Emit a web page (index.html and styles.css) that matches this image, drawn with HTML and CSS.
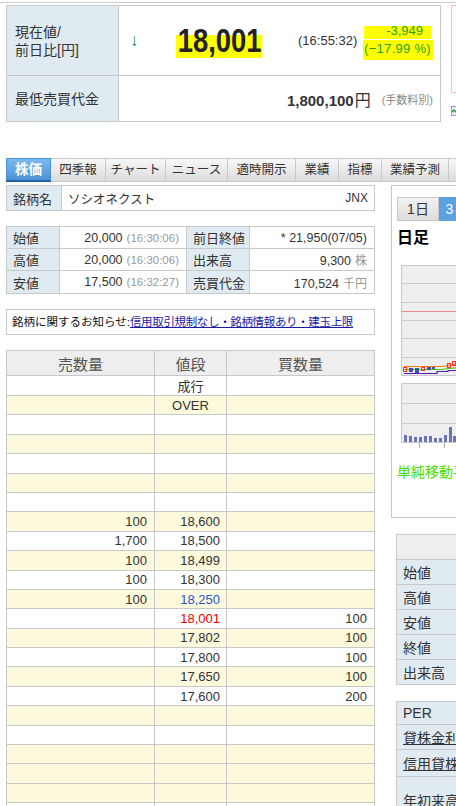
FILE: index.html
```html
<!DOCTYPE html>
<html lang="ja">
<head>
<meta charset="utf-8">
<title>株価</title>
<link rel="stylesheet" href="styles.css">
</head>
<body>
<div class="page">
  <div class="topline"></div>
  <div class="top">
    <table class="quote">
      <tr class="r1">
        <th>現在値/<br>前日比[円]</th>
        <td>
          <div class="now">
            <span class="arrow">↓</span>
            <span class="price"><span class="hl-price">18,001</span></span>
            <span class="time">(16:55:32)</span>
            <span class="chg"><span class="hl1">-3,949</span><span class="hl2">(−17.99 %)</span></span>
          </div>
        </td>
      </tr>
      <tr class="r2">
        <th>最低売買代金</th>
        <td>
          <div class="min"><span class="amt">1,800,100<span class="yen">円</span></span><span class="fee">(手数料別)</span></div>
        </td>
      </tr>
    </table>
    <div class="side">
      <div class="pinkbox"></div>
      <svg class="sideicon" width="8" height="10" viewBox="0 0 8 10"><rect x="0.5" y="0.5" width="7" height="9" fill="#e8eef4" stroke="#8aa0b8"/><path d="M1 6 L3 4 L5 6 L7 3" stroke="#3a9a3a" stroke-width="1.5" fill="none"/></svg>
    </div>
  </div>

  <div class="tabs">
    <div class="tab active">株価</div>
    <div class="tab">四季報</div>
    <div class="tab">チャート</div>
    <div class="tab">ニュース</div>
    <div class="tab">適時開示</div>
    <div class="tab">業績</div>
    <div class="tab">指標</div>
    <div class="tab">業績予測</div>
    <div class="tab">株主優待</div>
  </div>

  <div class="main">
    <div class="left">
      <table class="name">
        <tr>
          <th>銘柄名</th>
          <td><div class="nm"><span>ソシオネクスト</span><span class="mkt">JNX</span></div></td>
        </tr>
      </table>

      <table class="ohlc">
        <tr>
          <th>始値</th>
          <td>20,000<span class="tm">(16:30:06)</span></td>
          <th>前日終値</th>
          <td>* 21,950(07/05)</td>
        </tr>
        <tr>
          <th>高値</th>
          <td>20,000<span class="tm">(16:30:06)</span></td>
          <th>出来高</th>
          <td>9,300<span class="unit">株</span></td>
        </tr>
        <tr>
          <th>安値</th>
          <td>17,500<span class="tm">(16:32:27)</span></td>
          <th>売買代金</th>
          <td>170,524<span class="unit">千円</span></td>
        </tr>
      </table>

      <div class="notice">銘柄に関するお知らせ:<a href="#">信用取引規制なし・銘柄情報あり・建玉上限</a></div>

      <table class="book">
        <tr class="head"><th>売数量</th><th>値段</th><th>買数量</th></tr>
        <tr><td></td><td class="c">成行</td><td></td></tr>
        <tr class="y"><td></td><td class="c">OVER</td><td></td></tr>
        <tr><td></td><td></td><td></td></tr>
        <tr class="y"><td></td><td></td><td></td></tr>
        <tr><td></td><td></td><td></td></tr>
        <tr class="y"><td></td><td></td><td></td></tr>
        <tr><td></td><td></td><td></td></tr>
        <tr class="y"><td class="s">100</td><td class="p">18,600</td><td></td></tr>
        <tr><td class="s">1,700</td><td class="p">18,500</td><td></td></tr>
        <tr class="y"><td class="s">100</td><td class="p">18,499</td><td></td></tr>
        <tr><td class="s">100</td><td class="p">18,300</td><td></td></tr>
        <tr class="y"><td class="s">100</td><td class="p blue">18,250</td><td></td></tr>
        <tr><td></td><td class="p red">18,001</td><td class="b">100</td></tr>
        <tr class="y"><td></td><td class="p">17,802</td><td class="b">100</td></tr>
        <tr><td></td><td class="p">17,800</td><td class="b">100</td></tr>
        <tr class="y"><td></td><td class="p">17,650</td><td class="b">100</td></tr>
        <tr><td></td><td class="p">17,600</td><td class="b">200</td></tr>
        <tr class="y"><td></td><td></td><td></td></tr>
        <tr><td></td><td></td><td></td></tr>
        <tr class="y"><td></td><td></td><td></td></tr>
        <tr class="y"><td></td><td></td><td></td></tr>
        <tr class="y"><td></td><td></td><td></td></tr>
        <tr><td></td><td></td><td></td></tr>
      </table>
    </div>

    <div class="right">
      <div class="chartpanel">
        <div class="ctabs"><span class="ctab">1日</span><span class="ctab on">3ヶ月</span></div>
        <div class="ashi">日足</div>
        <div class="chart1">
          <svg width="200" height="109" viewBox="0 0 200 109">
            <g stroke="#cccccc" stroke-width="1">
              <line x1="0" y1="17.5" x2="200" y2="17.5"/>
              <line x1="0" y1="36.5" x2="200" y2="36.5"/>
              <line x1="0" y1="54.5" x2="200" y2="54.5"/>
              <line x1="0" y1="72.5" x2="200" y2="72.5"/>
              <line x1="0" y1="91.5" x2="200" y2="91.5"/>
            </g>
            <line x1="0" y1="45.5" x2="200" y2="45.5" stroke="#f08a8a"/>
            <polyline points="2,107.5 35,107.5 35,105.5 46,105.5 46,104.5 60,104.5" stroke="#5a18b8" stroke-width="1.2" fill="none"/>
            <polyline points="2,103.5 40,103.5 46,102.5 60,101.5" stroke="#44cc00" stroke-width="1.2" fill="none"/>
            <polyline points="2,100.5 40,100.5 46,99.5 52,98.5 60,97.5" stroke="#ff7a00" stroke-width="1.2" fill="none"/>
            <g fill="#4050a8">
              <rect x="7" y="102" width="4" height="4"/>
              <rect x="13" y="102" width="4" height="5"/>
              <rect x="25" y="101" width="4" height="3"/>
              <rect x="30" y="101" width="3" height="2"/>
            </g>
            <g fill="none" stroke="#ff3030" stroke-width="1">
              <rect x="1.5" y="101.5" width="3" height="4"/>
              <rect x="19.5" y="101.5" width="3" height="3"/>
              <rect x="45.5" y="97.5" width="3" height="4"/>
              <rect x="50.5" y="95.5" width="3" height="4"/>
            </g>
          </svg>
        </div>
        <div class="chart2">
          <svg width="200" height="58" viewBox="0 0 200 58">
            <g stroke="#cccccc" stroke-width="1">
              <line x1="0" y1="19.5" x2="200" y2="19.5"/>
              <line x1="0" y1="39.5" x2="200" y2="39.5"/>
            </g>
            <g fill="#6b74b8">
              <rect x="2" y="51" width="3" height="7"/>
              <rect x="7" y="52" width="3" height="6"/>
              <rect x="12" y="53" width="3" height="5"/>
              <rect x="17" y="53" width="3" height="5"/>
              <rect x="22" y="52" width="3" height="6"/>
              <rect x="27" y="52" width="3" height="6"/>
              <rect x="32" y="54" width="3" height="4"/>
              <rect x="37" y="54" width="3" height="4"/>
              <rect x="42" y="51" width="3" height="7"/>
              <rect x="47" y="43" width="3" height="15"/>
              <rect x="51" y="52" width="3" height="6"/>
            </g>
          </svg>
        </div>
        <svg class="ticks" width="200" height="5" viewBox="0 0 200 5">
          <g stroke="#aaaaaa"><line x1="18.5" y1="0" x2="18.5" y2="5"/><line x1="43.5" y1="0" x2="43.5" y2="5"/></g>
        </svg>
        <div class="sma">単純移動平均</div>
      </div>

      <table class="rt">
        <tr class="rh"><th></th><td></td></tr>
        <tr><th>始値</th><td></td></tr>
        <tr><th>高値</th><td></td></tr>
        <tr><th>安値</th><td></td></tr>
        <tr><th>終値</th><td></td></tr>
        <tr><th>出来高</th><td></td></tr>
      </table>

      <table class="rt rt2">
        <tr class="h23"><th>PER</th><td></td></tr>
        <tr class="h25"><th><a href="#">貸株金利</a></th><td></td></tr>
        <tr class="h27"><th><a href="#">信用貸株</a></th><td></td></tr>
        <tr class="h46"><th>年初来高値</th><td></td></tr>
      </table>
    </div>
  </div>
</div>
</body>
</html>
```

FILE: styles.css
```css
html, body {
  margin: 0;
  padding: 0;
  overflow: hidden;
  background: #ffffff;
}

body {
  width: 456px;
  height: 806px;
  font-family: "Liberation Sans", "Noto Sans CJK JP", sans-serif;
  color: #333333;
}

.page {
  width: 720px;
}

.topline {
  margin-top: 2px;
  border-top: 1px solid #cccccc;
}

.top {
  display: flex;
  align-items: flex-start;
  gap: 10px;
  margin-top: 2px;
  padding-left: 6px;
}

table {
  border-collapse: collapse;
  border-spacing: 0;
}

/* ---------- quote box ---------- */
.quote {
  width: 435px;
  border: 1px solid #c8c8c8;
}

.quote th,
.quote td {
  border: 1px solid #c8c8c8;
  padding: 0;
}

.quote th {
  width: 103px;
  padding-left: 8px;
  background: #e0eaf1;
  font-weight: normal;
  text-align: left;
  font-size: 14px;
  line-height: 18px;
  color: #333333;
}

.quote .r1 {
  height: 70px;
}

.quote .r2 {
  height: 46px;
}

.now {
  display: flex;
  align-items: center;
  padding-left: 11px;
  white-space: nowrap;
}

.arrow {
  width: 48px;
  flex: none;
  color: #138a13;
  font-size: 17px;
  line-height: 20px;
}

.price {
  width: 120px;
  flex: none;
  font-size: 33px;
  font-weight: bold;
  line-height: 36px;
  color: #222222;
}

.hl-price {
  display: inline-block;
  margin-left: -2px;
  padding: 0 1px 0 2px;
  background: linear-gradient(transparent 32%, #ffff00 32%, #ffff00 96%, transparent 96%);
  transform: scaleX(0.83);
  transform-origin: left center;
}

.time {
  width: 58px;
  flex: none;
  font-size: 13px;
  color: #333333;
}

.chg {
  flex: 1;
  display: flex;
  flex-direction: column;
  align-items: flex-end;
  padding-right: 9px;
  font-size: 13px;
  color: #1f9e1f;
}

.hl1 {
  display: block;
  padding: 0 8px 0 22px;
  line-height: 17px;
  background: linear-gradient(transparent 25%, #ffff00 25%);
}

.hl2 {
  display: block;
  margin-top: 1px;
  margin-right: -2px;
  padding: 2px 2px 4px 1px;
  line-height: 14px;
  background: #ffff00;
  letter-spacing: 0.3px;
}

.min {
  display: flex;
  justify-content: flex-end;
  align-items: center;
  padding-right: 7px;
}

.amt {
  font-size: 15px;
  font-weight: bold;
  color: #333333;
}

.yen {
  font-weight: normal;
  font-size: 16px;
  margin-left: 1px;
}

.fee {
  margin-left: 11px;
  font-size: 11px;
  color: #888888;
}

.side {
  display: flex;
  flex-direction: column;
  gap: 13px;
}

.pinkbox {
  width: 40px;
  height: 86px;
  border: 1px solid #f0c4c4;
  background: #fff8f8;
}

/* ---------- tabs ---------- */
.tabs {
  display: flex;
  margin-top: 36px;
  padding-left: 6px;
}

.tab {
  box-sizing: border-box;
  flex: none;
  height: 24px;
  border: 1px solid #c8c8c8;
  border-left: none;
  background: linear-gradient(#f7f7f7, #dcdcdc);
  font-size: 12.5px;
  line-height: 22px;
  text-align: center;
  color: #333333;
}

.tab:nth-child(1) { width: 45px; border-left: 1px solid #4a8fd0; }
.tab:nth-child(2) { width: 55px; }
.tab:nth-child(3) { width: 60px; }
.tab:nth-child(4) { width: 62px; }
.tab:nth-child(5) { width: 68px; }
.tab:nth-child(6) { width: 43px; }
.tab:nth-child(7) { width: 43px; }
.tab:nth-child(8) { width: 67px; }
.tab:nth-child(9) { width: 68px; }

.tab.active {
  background: linear-gradient(#7dbaee, #4d92d5);
  border-color: #4a8fd0;
  border-bottom: 2px solid #1f5fa6;
  color: #ffffff;
  font-weight: bold;
  font-size: 13.5px;
}

/* ---------- main ---------- */
.main {
  display: flex;
  align-items: flex-start;
  gap: 16px;
  margin-top: 3px;
  padding-left: 6px;
}

.left {
  width: 369px;
  flex: none;
  display: flex;
  flex-direction: column;
  gap: 15px;
}

.name {
  width: 369px;
  height: 26px;
}

.name th,
.name td {
  border: 1px solid #c8c8c8;
  padding: 0;
}

.name th {
  width: 48px;
  padding-left: 6px;
  background: #e0eaf1;
  font-weight: normal;
  text-align: left;
  font-size: 13px;
}

.nm {
  display: flex;
  justify-content: space-between;
  align-items: center;
  padding: 0 6px 0 6px;
  font-size: 12.5px;
}

.mkt {
  font-size: 12px;
}

.ohlc {
  width: 369px;
  font-size: 12.5px;
}

.ohlc tr {
  height: 22px;
}

.ohlc tr:last-child {
  height: 23px;
}

.ohlc th,
.ohlc td {
  border: 1px solid #c8c8c8;
  padding: 0;
}

.ohlc th {
  background: #e0eaf1;
  font-weight: normal;
  text-align: left;
  padding-left: 6px;
  font-size: 13px;
}

.ohlc th:nth-child(1) { width: 46px; }
.ohlc td:nth-child(2) { width: 119px; }
.ohlc th:nth-child(3) { width: 56px; }

.ohlc td {
  text-align: right;
  padding-right: 7px;
}

.tm {
  margin-left: 4px;
  font-size: 11.5px;
  color: #999999;
}

.unit {
  margin-left: 4px;
  font-size: 12px;
  color: #999999;
}

.notice {
  box-sizing: border-box;
  height: 26px;
  border: 1px solid #c8c8c8;
  padding-left: 5px;
  font-size: 11.5px;
  line-height: 24px;
  color: #111111;
  white-space: nowrap;
}

.notice a {
  color: #1a1aa6;
  text-decoration: underline;
  letter-spacing: -0.35px;
}

.book {
  width: 369px;
  font-size: 13px;
}

.book th,
.book td {
  border: 1px solid #c8c8c8;
  padding: 0;
}

.book tr {
  height: 19.4px;
}

.book tr.head {
  height: 25px;
}

.book th {
  background: #eeeeee;
  font-weight: normal;
  font-size: 15px;
  color: #555555;
}

.book th:nth-child(1) { width: 147px; }
.book th:nth-child(2) { width: 71px; }

.book tr.y td {
  background: #fdf9dc;
}

.book td.c {
  text-align: center;
}

.book td.s {
  text-align: right;
  padding-right: 7px;
}

.book td.p {
  text-align: right;
  padding-right: 6px;
}

.book td.b {
  text-align: right;
  padding-right: 7px;
}

.book td.blue {
  color: #2458c8;
}

.book td.red {
  color: #ee0000;
}

/* ---------- right column ---------- */
.right {
  width: 240px;
  flex: none;
  display: flex;
  flex-direction: column;
  align-items: flex-start;
}

.chartpanel {
  box-sizing: border-box;
  width: 240px;
  height: 333px;
  border: 1px solid #c8c8c8;
  padding: 11px 0 0 5px;
}

.ctabs {
  display: flex;
}

.ctab {
  box-sizing: border-box;
  width: 42px;
  height: 24px;
  border: 1px solid #c8c8c8;
  background: linear-gradient(#f2f2f2, #dcdcdc);
  font-size: 14px;
  line-height: 22px;
  text-align: center;
  color: #333333;
}

.ctab.on {
  width: 50px;
  border-left: none;
  background: #5ba0df;
  border-color: #5ba0df;
  color: #ffffff;
}

.ashi {
  margin-top: 7px;
  font-size: 16px;
  font-weight: bold;
  line-height: 19px;
  color: #000000;
}

.chart1 {
  margin: 18px 0 0 4px;
  width: 200px;
  height: 109px;
  border: 1px solid #c8c8c8;
  background: #eeeeee;
}

.chart1 svg,
.chart2 svg {
  display: block;
}

.chart2 {
  margin: 7px 0 0 4px;
  width: 200px;
  height: 58px;
  border: 1px solid #c8c8c8;
  background: #eeeeee;
}

.ticks {
  display: block;
  margin-left: 4px;
}

.sma {
  margin-top: 16px;
  font-size: 14px;
  line-height: 16px;
  color: #44dd00;
}

.rt {
  width: 200px;
  margin: 16px 0 0 5px;
}

.rt th,
.rt td {
  border: 1px solid #c8c8c8;
  padding: 0;
}

.rt tr {
  height: 25px;
}

.rt th {
  width: 92px;
  padding-left: 6px;
  background: #e0eaf1;
  font-weight: normal;
  text-align: left;
  font-size: 14px;
  color: #333333;
}

.rt tr.rh th,
.rt tr.rh td {
  background: #eeeeee;
}

.rt2 tr.h23 { height: 23px; }
.rt2 tr.h25 { height: 25px; }
.rt2 tr.h27 { height: 27px; }
.rt2 tr.h46 { height: 46px; }

.rt2 a {
  color: #333333;
  text-decoration: underline;
}
```
